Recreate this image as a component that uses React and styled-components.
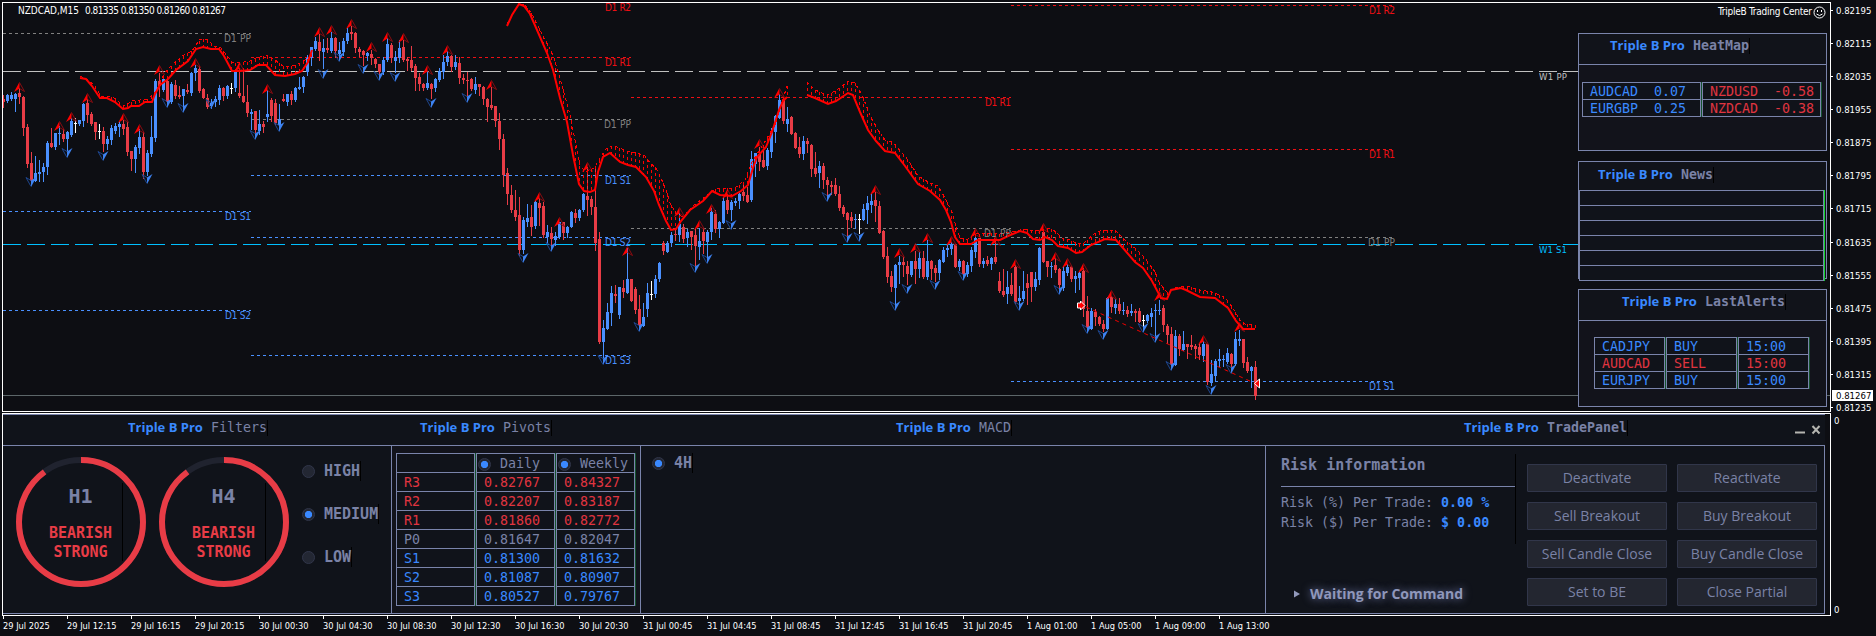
import React from 'react';
import styled, { createGlobalStyle } from 'styled-components';

// one candle per item: colour, high, body top, body bottom, low
const candles = `r 95 99 102 107,b 94 95 101 102,b 92 95 99 100,b 93 94 99 111,r 88 93 97 103,r 96 97 128 135,r 124 127 164 167,r 152 163 181 181
b 156 173 181 181,b 160 172 174 181,b 163 167 172 181,b 141 143 167 174,r 128 143 147 147,b 133 133 147 149,b 126 133 134 144,r 129 134 139 141
b 131 132 139 150,b 118 121 135 136,w 118 123 124 132,b 120 120 124 125,b 103 104 121 126,r 99 103 115 122,r 112 114 124 125,r 122 122 132 139
w 124 131 132 138,r 127 131 144 151,b 136 139 144 149,b 125 128 140 144,b 123 126 131 133,b 122 124 127 136,r 120 124 129 134,r 122 127 152 155
r 151 151 159 170,b 145 147 159 172,b 129 137 148 153,r 132 137 172 178,b 150 153 172 175,b 116 137 154 156,b 79 81 138 141,r 73 81 86 96
b 76 79 90 91,r 80 81 102 103,b 82 84 102 103,r 80 85 96 98,r 86 95 97 98,b 89 89 96 107,r 84 90 92 93,b 72 73 93 95
b 65 68 73 80,r 66 69 91 92,r 88 89 98 98,r 94 98 107 108,b 99 103 106 108,b 96 99 102 106,b 85 88 100 104,r 87 88 96 100
b 85 86 96 98,w 83 88 89 93,b 71 71 88 91,r 69 93 96 97,r 72 96 102 102,r 85 102 113 116,b 109 112 114 129,r 111 111 130 132
b 110 124 131 134,r 121 124 127 132,b 90 114 117 121,r 98 100 116 121,r 99 103 123 124,b 104 119 125 128,r 94 99 101 101,b 94 94 102 105
r 91 94 100 104,b 87 88 100 101,b 77 87 89 89,b 76 77 87 92,b 55 58 72 75,b 47 47 58 65,b 37 41 49 50,r 34 42 51 60
b 39 48 52 68,r 38 48 50 52,b 32 38 51 52,r 37 38 51 57,b 42 50 54 56,b 38 41 52 55,b 28 33 41 43,r 26 32 34 39
r 32 33 48 52,r 47 49 52 56,r 50 51 55 65,b 52 53 56 60,r 50 54 58 64,r 58 59 64 67,r 64 64 72 76,b 57 60 72 74
b 38 44 60 61,r 43 45 58 62,b 51 57 61 72,b 40 48 58 62,r 40 47 60 61,r 57 59 61 70,r 46 60 68 70,r 64 66 78 90
r 73 77 84 90,r 83 84 88 90,b 72 83 88 89,r 83 84 89 98,b 78 79 88 91,b 68 71 80 81,b 55 62 72 78,b 51 56 62 65
r 55 56 67 71,b 55 62 67 69,r 57 63 78 83,r 74 78 80 83,r 72 80 81 95,r 78 79 89 90,b 77 84 90 93,r 84 84 87 95
r 86 87 99 104,r 98 99 107 121,r 87 105 108 109,r 106 106 121 126,r 113 121 139 149,r 134 139 175 186,r 168 173 194 204,r 185 195 210 212
r 190 210 217 220,r 197 215 250 255,b 217 220 250 253,b 204 218 222 226,r 205 217 227 235,b 201 202 226 228,r 198 203 208 225,r 202 206 235 237
b 225 232 237 243,r 227 233 239 246,b 232 236 240 245,b 222 222 237 238,r 222 222 233 239,b 226 227 233 237,b 211 212 227 227,r 209 213 218 222
b 209 210 218 220,b 193 194 210 211,r 167 196 200 215,r 196 199 207 214,r 169 207 243 250,r 232 239 342 343,b 320 328 342 357,b 303 312 329 329
b 286 293 313 325,r 285 294 296 302,b 287 287 315 318,r 280 288 292 297,b 248 279 293 293,r 279 279 301 301,r 287 289 310 313,r 295 309 325 327
b 303 317 326 326,b 283 293 309 316,w 281 294 295 299,b 275 279 294 297,b 262 263 279 281,r 241 243 251 254,b 241 243 252 252,b 232 235 243 246
r 230 234 235 240,b 213 224 235 241,r 224 227 239 242,b 229 232 238 246,r 231 231 237 249,r 229 235 246 265,b 228 241 247 259,r 228 232 241 253
b 230 232 242 258,b 208 212 232 239,r 210 214 229 232,b 221 222 229 237,b 197 201 223 223,r 195 200 210 213,b 200 202 210 220,b 198 201 203 205
b 193 194 201 208,r 184 192 196 200,r 187 195 202 202,b 151 159 200 201,b 153 153 164 176,r 147 154 162 170,r 150 160 167 167,b 148 150 166 169
b 128 131 152 157,b 115 116 132 142,b 94 100 118 118,r 97 100 121 123,b 107 119 124 131,r 116 117 134 134,r 132 133 148 148,r 137 147 154 157
b 136 141 154 159,r 138 141 144 152,r 144 145 169 176,r 152 168 174 176,b 161 166 173 187,r 163 166 180 188,r 177 180 185 195,r 181 185 187 194
r 178 185 194 195,r 186 194 208 210,r 205 207 214 216,r 212 213 220 235,r 212 217 221 227,b 214 219 220 228,w 214 219 220 233,b 204 209 220 220
b 196 203 210 223,b 194 201 205 212,r 192 200 206 221,r 201 206 233 233,r 230 231 257 258,r 247 256 277 282,r 271 276 287 291,b 264 265 288 305
b 256 262 265 283,r 257 262 265 276,r 261 266 274 284,b 261 261 275 276,r 251 261 269 283,b 252 258 269 277,r 251 258 277 278,b 240 261 277 279
r 260 261 269 279,r 265 268 273 281,b 259 260 273 279,b 247 250 262 262,b 244 248 250 256,b 242 244 249 254,r 244 244 267 267,b 259 261 267 270
r 260 261 274 274,b 262 265 274 276,b 247 250 266 271,b 235 238 252 257,r 238 238 264 266,b 258 261 264 267,r 256 260 264 265,b 257 258 264 269
r 240 257 262 263,r 272 281 291 292,r 269 291 295 296,b 271 287 294 303,r 273 285 294 295,r 265 267 302 303,b 286 298 301 305,b 271 291 299 300
r 274 283 288 304,r 272 272 287 301,b 272 279 287 290,b 247 248 280 284,r 230 232 262 262,r 261 261 267 276,b 262 266 267 277,r 258 265 270 272
r 268 269 285 288,b 266 271 288 290,b 264 267 273 275,r 266 267 279 281,b 271 276 279 292,b 272 273 278 289,r 268 271 309 316,r 296 311 328 329
b 308 311 329 329,r 309 312 317 325,r 316 317 324 325,r 320 324 329 331,b 297 298 329 329,r 296 297 307 312,b 299 304 308 313,r 298 304 311 313
b 302 310 311 314,r 306 310 314 316,b 304 311 313 315,r 309 311 313 321,r 308 311 322 322,w 315 320 321 327,b 314 315 321 322,b 308 313 317 326
b 304 310 311 335,b 300 310 311 314,r 305 308 325 331,r 324 326 335 343,r 327 334 365 365,b 330 336 365 365,r 334 336 349 355,b 331 344 350 350
r 344 344 347 358,r 335 345 347 349,r 344 346 349 358,r 344 347 355 359,b 341 344 356 361,r 344 344 382 384,b 360 374 383 385,b 359 361 376 381
b 349 359 361 366,b 355 359 360 366,b 348 353 362 363,r 353 354 364 366,b 332 339 364 365,b 330 339 341 345,r 339 339 363 367,r 357 362 371 372
b 366 367 371 387,r 361 367 396 399`
  .split(/[,\n]/)
  .map((line, index) => {
    const [kind, ...values] = line.trim().split(' ');
    const [high, top, bottom, low] = values.map(Number);
    return { kind, high, top, bottom, low, x: 3 + index * 4 };
  });

const candleColors = { r: '#e83c46', b: '#4a90ff', w: '#ffffff' };

const toPoints = (text) =>
  text
    .trim()
    .split(/\s+/)
    .map((pair) => pair.split(',').map(Number));

const upArrows = toPoints(`19,82 59,121 71,112 87,93 123,113 139,124 159,65 195,58
  239,62 267,84 319,27 331,25 351,19 371,42 387,32 403,33 427,65 447,45 491,80 539,192
  587,162 559,217 627,246 679,207 699,220 711,204 727,189 759,139 779,88 875,185 899,248
  915,243 927,233 951,236 975,228 995,236 1015,259 1043,223 1055,252 1067,258 1083,263
  1111,290 1159,291 1203,335 1239,322`);

const downArrows = toPoints(`31,187 67,158 103,161 147,184 167,108 183,113 211,109
  255,140 279,132 323,79 339,62 363,74 379,81 395,82 431,108 467,103 523,263 551,252
  603,365 639,332 695,273 707,264 731,230 827,202 847,243 859,242 895,311 907,294 935,290
  963,281 1019,311 1059,295 1087,334 1103,340 1143,333 1155,343 1171,371 1211,395 1231,374`);

const averages = [
  {
    line: toPoints(`80,78 86,79 92,86 100,98 107,98 115,102 123,109 128,108 131,106 139,106
      145,102 152,102 155,94 160,85 168,79 176,70 188,61 196,49 203,47 211,49 219,49 224,56
      232,71 241,71 250,70 258,65 266,65 275,75 285,76 295,74 302,71 308,62 312,50`),
    band: toPoints(`80,76 88,80 95,86 101,96 113,97 124,106 132,101 148,99 157,90 162,78 167,70
      175,62 185,54 192,51 200,39 208,40 214,46 220,47 228,57 233,63 244,62 250,61 258,57
      266,55 275,60 283,66 292,66 300,63 310,57`),
  },
  {
    line: toPoints(`507,26 512,15 519,4 524,6 530,14 537,30 547,53 553,70 560,98 567,122 573,155
      579,184 584,191 590,192 595,190 598,172 603,157 610,153 620,162 628,165 636,167 646,177
      654,191 659,205 666,221 671,230 676,229 681,221 690,210 703,201 712,191 720,195 732,196
      741,191 748,185 753,168 757,157 766,147 772,132 779,110 783,101 787,97`),
    band: toPoints(`507,24 519,4 524,4 532,14 540,30 553,55 560,78 570,115 575,140 580,165 585,172
      594,168 599,160 605,150 610,146 617,147 627,151 637,153 645,156 650,163 656,168 661,178
      666,190 670,203 676,213 683,217 695,204 705,197 715,189 735,188 745,180 752,162 766,140
      775,125 787,86`),
  },
  {
    line: toPoints(`807,95 815,98 828,104 836,101 848,93 853,95 860,112 868,130 876,141 885,151
      895,153 905,166 918,184 930,191 940,200 946,210 951,222 955,237 960,244 971,244 978,240
      1000,240 1008,236 1020,231 1027,233 1033,239 1040,240 1045,237 1052,240 1058,246 1068,248
      1076,253 1082,252 1091,245 1105,239 1116,240 1123,248 1135,262 1143,268 1152,281 1160,296
      1161,298 1167,299 1171,290 1181,288 1186,290 1200,297 1215,298 1228,308 1236,321 1243,329
      1255,329`),
    band: toPoints(`807,82 815,90 827,95 837,90 848,81 855,83 862,95 870,115 878,130 885,140
      893,142 897,147 908,160 918,176 930,183 938,186 945,198 952,212 957,230 960,238 967,240
      975,234 985,233 1000,234 1015,231 1025,229 1035,231 1043,230 1050,228 1056,232 1062,238
      1070,240 1078,244 1085,242 1095,233 1103,230 1115,230 1125,240 1136,249 1145,258 1155,272
      1160,284 1167,292 1175,288 1183,286 1190,287 1200,290 1212,292 1225,297 1232,307 1240,320
      1245,324 1255,325`),
  },
];

const valueAt = (points, x) => {
  const next = points.findIndex((point) => point[0] >= x);
  if (next < 1) return points[next < 0 ? points.length - 1 : 0][1];
  const [x1, y1] = points[next - 1];
  const [x2, y2] = points[next];
  return y1 + ((y2 - y1) * (x - x1)) / (x2 - x1);
};

const GRAY = '#808080';
const RED = '#ee0f14';
const BLUE = '#4a90ff';

// label, start x, end x, y, colour
const levels = [
  ['D1 PP', 3, 251, 33, GRAY],
  ['D1 S1', 3, 251, 211, BLUE],
  ['D1 S2', 3, 251, 310, BLUE],
  ['D1 R2', 631, 631, 2, RED],
  ['D1 R1', 251, 631, 57, RED],
  ['D1 PP', 251, 631, 119, GRAY],
  ['D1 S1', 251, 631, 175, BLUE],
  ['D1 S2', 251, 631, 237, BLUE],
  ['D1 S3', 251, 631, 355, BLUE],
  ['D1 R1', 631, 1011, 97, RED],
  ['D1 PP', 631, 1011, 228, GRAY],
  ['D1 R2', 1011, 1395, 5, RED],
  ['D1 R1', 1011, 1395, 149, RED],
  ['D1 PP', 1011, 1395, 237, GRAY],
  ['D1 S1', 1011, 1395, 381, BLUE],
];

const prices = [
  '0.82195',
  '0.82115',
  '0.82035',
  '0.81955',
  '0.81875',
  '0.81795',
  '0.81715',
  '0.81635',
  '0.81555',
  '0.81475',
  '0.81395',
  '0.81315',
  '0.81235',
];

const times = [
  '29 Jul 2025',
  '29 Jul 12:15',
  '29 Jul 16:15',
  '29 Jul 20:15',
  '30 Jul 00:30',
  '30 Jul 04:30',
  '30 Jul 08:30',
  '30 Jul 12:30',
  '30 Jul 16:30',
  '30 Jul 20:30',
  '31 Jul 00:45',
  '31 Jul 04:45',
  '31 Jul 08:45',
  '31 Jul 12:45',
  '31 Jul 16:45',
  '31 Jul 20:45',
  '1 Aug 01:00',
  '1 Aug 05:00',
  '1 Aug 09:00',
  '1 Aug 13:00',
];

const pivots = [
  ['R3', '0.82767', '0.84327', 'red'],
  ['R2', '0.82207', '0.83187', 'red'],
  ['R1', '0.81860', '0.82772', 'red'],
  ['P0', '0.81647', '0.82047', 'muted'],
  ['S1', '0.81300', '0.81632', 'blue'],
  ['S2', '0.81087', '0.80907', 'blue'],
  ['S3', '0.80527', '0.79767', 'blue'],
];

const alerts = [
  ['CADJPY', 'BUY', '15:00', 'blue'],
  ['AUDCAD', 'SELL', '15:00', 'red'],
  ['EURJPY', 'BUY', '15:00', 'blue'],
];

const actions = [
  'Deactivate',
  'Reactivate',
  'Sell Breakout',
  'Buy Breakout',
  'Sell Candle Close',
  'Buy Candle Close',
  'Set to BE',
  'Close Partial',
];

const Chart = () => (
  <ChartSvg width="1829" height="408" viewBox="3 3 1829 408">
    <g shapeRendering="crispEdges">
      {levels.map(([label, x1, x2, y, color], index) => (
        <path
          key={index}
          d={`M${x1} ${y + 0.5}H${x2}`}
          stroke={color}
          strokeDasharray="3 3"
        />
      ))}
      <path d="M3 71.5H1578" stroke="#c0c0c0" strokeDasharray="18 6" />
      <path d="M3 244.5H1578" stroke="#00bfff" strokeDasharray="18 6" />
      <path d="M3 395.5H1831" stroke="#5c6669" />
      {candles.map((candle) => (
        <g key={candle.x} fill={candleColors[candle.kind]}>
          <rect
            x={candle.x}
            y={candle.high}
            width="1"
            height={candle.low - candle.high + 1}
          />
          <rect
            x={candle.x - 1}
            y={candle.top}
            width="3"
            height={candle.bottom - candle.top}
          />
        </g>
      ))}
    </g>
    {upArrows.map(([x, y]) => (
      <g key={`${x}-${y}`} transform={`translate(${x + 0.5} ${y})`}>
        <path d="M0 0L-5.5 10L0 6.5Z" fill="#ff0000" />
        <path d="M0 .5L5 9.5L0 6.5" fill="none" stroke="#8a0b10" />
      </g>
    ))}
    {downArrows.map(([x, y]) => (
      <g key={`${x}-${y}`} transform={`translate(${x} ${y})`}>
        <path d="M0 0L5.5 -10L0 -6.5Z" fill="#3d83f2" />
        <path d="M0 -.5L-5 -9.5L0 -6.5" fill="none" stroke="#1d468f" />
      </g>
    ))}
    {averages.map(({ line, band }, index) => (
      <g key={index} fill="none" stroke="#ff0000">
        <polyline points={line.join(' ')} strokeWidth="2" />
        <g strokeWidth="1" strokeDasharray="3 3" shapeRendering="crispEdges">
          <polyline points={band.join(' ')} />
          {candles
            .filter(({ x }) => x >= line[0][0] && x <= line[line.length - 1][0])
            .map(({ x }) => (
              <path
                key={x}
                d={`M${x + 0.5} ${valueAt(band, x)}V${valueAt(line, x)}`}
              />
            ))}
        </g>
      </g>
    ))}
    <path d="M1086 307L1252 382" stroke="#e00" strokeDasharray="4 4" />
    <path
      d="M1077.5 303H1080.500V301L1085 305.500L1080.500 310V308H1077.500Z"
      fill="#f00"
      stroke="#fff"
    />
    <path d="M1254.500 383.500L1259.500 379V388Z" fill="#f00" stroke="#fff" />
    {levels.map(([label, x1, x2, y, color], index) => (
      <text
        key={index}
        x={x2 - (label === 'D1 PP' ? 27 : 26)}
        y={y + 9}
        fill={color}
        fontSize="10"
        textLength={label === 'D1 PP' ? 27 : 26}
      >
        {label}
      </text>
    ))}
    <text x="1539" y="80" fill="#c0c0c0" fontSize="9.500" textLength="28">
      W1 PP
    </text>
    <text x="1539" y="253" fill="#00bfff" fontSize="9.500" textLength="28">
      W1 S1
    </text>
    <text x="18" y="14" fill="#fff" fontSize="10" textLength="61">
      NZDCAD,M15
    </text>
    <text x="85" y="14" fill="#fff" fontSize="10" textLength="141">
      0.81335 0.81350 0.81260 0.81267
    </text>
    <text x="1718" y="15" fill="#fff" fontSize="10" textLength="94">
      TripleB Trading Center
    </text>
    <g fill="none" stroke="#fff">
      <circle cx="1819.500" cy="12.500" r="5.500" />
      <path d="M1816.500 14q3 3 6 0M1817.500 10v2M1821.500 10v2" />
    </g>
  </ChartSvg>
);

const Title = ({ name, bold }) => (
  <TitleWrapper>
    <Brand>Triple B Pro</Brand>
    <PanelName $bold={bold}>{name}</PanelName>
  </TitleWrapper>
);

const HeatMap = () => (
  <SidePanel>
    <SideHeader $height={30} $indent={31} $lift={8}>
      <Title name="HeatMap" bold />
    </SideHeader>
    <SideBody $padding="17px 0 0 3px">
      <Table $columns="120px 120px" $row={17}>
        <Cell $tone="blue" $wide>
          <span>AUDCAD</span>
          <span>0.07</span>
        </Cell>
        <Cell $tone="red" $wide>
          <span>NZDUSD</span>
          <span>-0.58</span>
        </Cell>
        <Cell $tone="blue" $wide>
          <span>EURGBP</span>
          <span>0.25</span>
        </Cell>
        <Cell $tone="red" $wide>
          <span>NZDCAD</span>
          <span>-0.38</span>
        </Cell>
      </Table>
    </SideBody>
  </SidePanel>
);

const News = () => (
  <SidePanel>
    <SideHeader $height={27} $indent={19} $lift={4} $plain>
      <Title name="News" bold />
    </SideHeader>
    <NewsRows>
      {[0, 1, 2, 3, 4, 5].map((row) => (
        <NewsRow key={row} />
      ))}
    </NewsRows>
  </SidePanel>
);

const LastAlerts = () => (
  <SidePanel>
    <SideHeader $height={30} $indent={43} $lift={8}>
      <Title name="LastAlerts" bold />
    </SideHeader>
    <SideBody $padding="16px 0 0 15px">
      <Table $columns="72px 72px 72px" $row={17}>
        {alerts.map(([pair, side, time, tone]) => (
          <React.Fragment key={pair}>
            <Cell $tone={tone}>{pair}</Cell>
            <Cell $tone={tone}>{side}</Cell>
            <Cell $tone={tone}>{time}</Cell>
          </React.Fragment>
        ))}
      </Table>
    </SideBody>
  </SidePanel>
);

const Gauge = ({ frame }) => (
  <GaugeWrapper>
    <svg width="130" height="130" viewBox="0 0 130 130" fill="none">
      <circle cx="65" cy="65" r="62" stroke="#20232f" strokeWidth="6" />
      <circle
        cx="65"
        cy="65"
        r="62"
        stroke="#e83c46"
        strokeWidth="6"
        pathLength="100"
        strokeDasharray="90 10"
        transform="rotate(-90 65 65)"
      />
    </svg>
    <GaugeText>
      <GaugeFrame>{frame}</GaugeFrame>
      <GaugeState>BEARISH</GaugeState>
      <GaugeState>STRONG</GaugeState>
    </GaugeText>
  </GaugeWrapper>
);

const Option = ({ label, checked }) => (
  <OptionWrapper>
    <Radio $checked={checked} />
    <OptionLabel>{label}</OptionLabel>
  </OptionWrapper>
);

const App = () => {
  return (
    <Page>
      <GlobalStyle />
      <Main>
        <Windows>
          <ChartWindow>
            <Chart />
            <SidePanels>
              <HeatMap />
              <News />
              <LastAlerts />
            </SidePanels>
          </ChartWindow>
          <PanelWindow>
            <Section $width={388}>
              <SectionHeader $indent={125}>
                <Title name="Filters" />
              </SectionHeader>
              <FiltersBody>
                <Gauge frame="H1" />
                <Gauge frame="H4" />
                <Options>
                  <Option label="HIGH" />
                  <Option label="MEDIUM" checked />
                  <Option label="LOW" />
                </Options>
              </FiltersBody>
            </Section>
            <Section $width={249}>
              <SectionHeader $indent={29}>
                <Title name="Pivots" />
              </SectionHeader>
              <PivotsBody>
                <Table $columns="80px 80px 80px" $row={19}>
                  <Cell />
                  <Cell $tone="muted" $radio>
                    <Radio $checked />
                    Daily
                  </Cell>
                  <Cell $tone="muted" $radio>
                    <Radio $checked />
                    Weekly
                  </Cell>
                  {pivots.map(([level, daily, weekly, tone]) => (
                    <React.Fragment key={level}>
                      <Cell $tone={tone}>{level}</Cell>
                      <Cell $tone={tone}>{daily}</Cell>
                      <Cell $tone={tone}>{weekly}</Cell>
                    </React.Fragment>
                  ))}
                </Table>
              </PivotsBody>
            </Section>
            <Section $width={625}>
              <SectionHeader $indent={256}>
                <Title name="MACD" />
              </SectionHeader>
              <MacdBody>
                <Option label="4H" checked />
              </MacdBody>
            </Section>
            <Section $width={560}>
              <SectionHeader $indent={199}>
                <Title name="TradePanel" bold />
                <WindowIcons width="26" height="12" viewBox="0 0 26 12">
                  <path d="M0 8.500H10" />
                  <path d="M17.500 2L24.500 9.500M24.500 2L17.500 9.500" />
                </WindowIcons>
              </SectionHeader>
              <TradeBody>
                <RiskColumn>
                  <RiskInfo>
                    <RiskTitle>Risk information</RiskTitle>
                    <RiskRow>
                      Risk (%) Per Trade: <b>0.00 %</b>
                    </RiskRow>
                    <RiskRow>
                      Risk ($) Per Trade: <b>$ 0.00</b>
                    </RiskRow>
                  </RiskInfo>
                  <Status>
                    <svg width="6" height="8" viewBox="0 0 6 8">
                      <path d="M0 .5L6 4L0 7.500Z" fill="#9299bb" />
                    </svg>
                    Waiting for Command
                  </Status>
                </RiskColumn>
                <Actions>
                  {actions.map((action) => (
                    <ActionButton key={action}>{action}</ActionButton>
                  ))}
                </Actions>
              </TradeBody>
            </Section>
          </PanelWindow>
        </Windows>
        <PriceAxis>
          <Prices>
            {prices.map((price) => (
              <Price key={price}>{price}</Price>
            ))}
            <CurrentPrice>0.81267</CurrentPrice>
          </Prices>
          <Scale>
            <span>0</span>
            <span>0</span>
          </Scale>
        </PriceAxis>
      </Main>
      <TimeAxis>
        {times.map((time) => (
          <Time key={time}>{time}</Time>
        ))}
      </TimeAxis>
    </Page>
  );
};

export default App;

const tones = { red: '#e03540', blue: '#3a89ff', muted: '#7a82a6' };

const GlobalStyle = createGlobalStyle`
  :root {
    --bg: #0d0e13;
    --panel: #10131a;
    --line: #7a84ab;
    --muted: #7a82a6;
    --blue: #3a89ff;
    --red: #e83c46;
    --small: 'DejaVu Sans Condensed', 'DejaVu Sans', sans-serif;
    --sans: 'Open Sans', sans-serif;
    --mono: 'DejaVu Sans Mono', monospace;
  }
  * {
    box-sizing: border-box;
  }
  body {
    margin: 0;
    background: var(--bg);
  }
`;

const Page = styled.div`
  width: 1876px;
  height: 636px;
  padding: 2px 0 0 2px;
  overflow: hidden;
  background: var(--bg);
  color: #fff;
  font-family: var(--small);
  font-stretch: condensed;
`;

const Main = styled.main`
  display: flex;
`;

const Windows = styled.div`
  display: flex;
  flex-direction: column;
  gap: 1px;
  width: 1829px;
`;

const ChartWindow = styled.section`
  position: relative;
  height: 410px;
  border: 1px solid #fff;
  overflow: hidden;
`;

const ChartSvg = styled.svg`
  display: block;
  font-family: var(--small);
  font-stretch: condensed;
`;

const SidePanels = styled.div`
  position: absolute;
  top: 30px;
  right: 3px;
  display: flex;
  flex-direction: column;
  gap: 10px;
  width: 249px;
`;

const SidePanel = styled.div`
  height: 118px;
  border: 1px solid var(--line);
  background: var(--panel);
`;

const SideHeader = styled.div`
  display: flex;
  align-items: center;
  height: ${({ $height }) => $height + 1}px;
  padding: 0 0 ${({ $lift }) => $lift}px ${({ $indent }) => $indent}px;
  border-bottom: 1px solid ${({ $plain }) => ($plain ? 'transparent' : 'var(--line)')};
  background: #11131a;
`;

const SideBody = styled.div`
  padding: ${({ $padding }) => $padding};
  height: 85px;
  background: #12131b;
`;

const TitleWrapper = styled.div`
  display: flex;
  align-items: center;
`;

const Brand = styled.span`
  width: 83px;
  color: var(--blue);
  font: 700 13px/18px var(--sans);
  white-space: nowrap;
`;

const PanelName = styled.span`
  margin-top: 2px;
  border-right: 1px solid #000;
  color: var(--muted);
  font: ${({ $bold }) => ($bold ? 700 : 400)} 13.300px/16px var(--mono);
`;

const Table = styled.div`
  display: grid;
  grid-template-columns: ${({ $columns }) => $columns};
  grid-auto-rows: ${({ $row }) => $row}px;
  width: fit-content;
`;

const Cell = styled.div`
  display: flex;
  align-items: center;
  gap: ${({ $wide }) => ($wide ? 16 : 9)}px;
  margin: 0 1px -1px 0;
  padding: 2px 0 0 ${({ $radio }) => ($radio ? 1 : 7)}px;
  border: 1px solid var(--line);
  box-shadow: 1px 0 0 #14532e;
  background: var(--panel);
  color: ${({ $tone }) => tones[$tone]};
  font: 400 13.300px/16px var(--mono);
`;

const NewsRows = styled.div`
  width: 246px;
  border-right: 1px solid #0fd62a;
`;

const NewsRow = styled.div`
  height: 16px;
  margin-bottom: -1px;
  border: 1px solid var(--line);
  background: var(--panel);
`;

const PanelWindow = styled.section`
  display: flex;
  height: 203px;
  border: 1px solid #fff;
  background: var(--bg);
`;

const Section = styled.div`
  width: ${({ $width }) => $width}px;
  height: 200px;
  border-top: 1px solid var(--line);
  border-bottom: 1px solid var(--line);
  background: var(--panel);
`;

const SectionHeader = styled.header`
  display: flex;
  align-items: center;
  justify-content: space-between;
  height: 31px;
  padding: 0 4px 6px ${({ $indent }) => $indent}px;
  border-bottom: 1px solid var(--line);
`;

const WindowIcons = styled.svg`
  margin-top: 5px;
  fill: none;
  stroke: #b5b5b0;
  stroke-width: 2;
`;

const FiltersBody = styled.div`
  display: flex;
  gap: 13px;
  height: 167px;
  padding: 11px 0 0 13px;
`;

const GaugeWrapper = styled.div`
  display: grid;
  width: 130px;
  height: 130px;

  > * {
    grid-area: 1 / 1;
  }
`;

const GaugeText = styled.div`
  width: 84px;
  height: 78px;
  margin: 26px 0 0 23px;
  border-right: 1px solid #000;
  text-align: center;
`;

const GaugeFrame = styled.div`
  margin-bottom: 15px;
  color: var(--muted);
  font: 700 20px/26px var(--mono);
`;

const GaugeState = styled.div`
  color: var(--red);
  font: 700 15px/19px var(--mono);
`;

const Options = styled.div`
  display: flex;
  flex-direction: column;
  gap: 23px;
  padding: 4px 0 0 0;
`;

const OptionWrapper = styled.div`
  display: flex;
  align-items: center;
  gap: 9px;
  height: 20px;
`;

const OptionLabel = styled.span`
  color: var(--muted);
  font: 700 15px/20px var(--mono);
  border-right: 1px solid #000;
`;

const Radio = styled.span`
  flex: none;
  width: 13px;
  height: 13px;
  border: 1px solid #31364a;
  border-radius: 50%;
  background: ${({ $checked }) =>
    $checked
      ? 'radial-gradient(circle, #3a89ff 3.300px, #232733 4px)'
      : '#232733'};
`;

const PivotsBody = styled.div`
  height: 167px;
  padding: 7px 0 0 4px;
  border-left: 1px solid var(--line);
  background: #12131b;
`;

const MacdBody = styled.div`
  height: 167px;
  padding: 7px 0 0 11px;
  border-left: 1px solid var(--line);
`;

const TradeBody = styled.div`
  display: flex;
  gap: 11px;
  height: 167px;
  border-left: 1px solid var(--line);
  border-right: 1px solid var(--line);
`;

const RiskColumn = styled.div`
  width: 250px;
  padding: 8px 0 0 15px;
`;

const RiskInfo = styled.div`
  height: 90px;
  border-right: 1px solid #000;
  color: var(--muted);
`;

const RiskTitle = styled.div`
  height: 33px;
  margin-bottom: 6px;
  border-bottom: 1px solid var(--line);
  font: 700 15px/22px var(--mono);
`;

const RiskRow = styled.div`
  font: 400 13.300px/20px var(--mono);
  white-space: pre;

  b {
    color: var(--blue);
  }
`;

const Status = styled.div`
  display: flex;
  align-items: center;
  gap: 10px;
  margin: 40px 0 0 13px;
  color: #8f97bb;
  font: 700 14px/20px var(--sans);
  text-shadow: 0 0 8px #6d76a4;
`;

const Actions = styled.div`
  display: grid;
  grid-template-columns: 140px 140px;
  grid-auto-rows: 28px;
  gap: 10px;
  padding-top: 18px;
`;

const ActionButton = styled.button`
  padding: 0 0 1px;
  border: 1px solid #31364a;
  border-radius: 1px;
  background: #232630;
  color: var(--muted);
  font: 400 14px/20px var(--sans);
`;

const PriceAxis = styled.aside`
  width: 45px;
  font-size: 9.500px;
  line-height: 11px;
`;

const Prices = styled.div`
  position: relative;
  height: 412px;
  padding-top: 3px;
`;

const Price = styled.div`
  display: flex;
  align-items: flex-start;
  height: 33.080px;

  &::before {
    content: '';
    width: 2px;
    height: 1px;
    margin: 5px 3px 0 0;
    background: #fff;
  }
`;

const CurrentPrice = styled.div`
  position: absolute;
  top: 388px;
  left: 1px;
  width: 41px;
  padding-left: 4px;
  background: #fff;
  color: #000;
`;

const Scale = styled.div`
  display: flex;
  flex-direction: column;
  justify-content: space-between;
  height: 200px;
  margin-top: 1px;
  padding-left: 3px;
`;

const TimeAxis = styled.footer`
  display: flex;
  padding-left: 1px;
  font-size: 9.200px;
  line-height: 11px;
`;

const Time = styled.div`
  width: 64px;
  text-indent: -1px;
  white-space: nowrap;

  &::before {
    content: '';
    display: block;
    width: 1px;
    height: 3px;
    margin-bottom: 1px;
    background: #fff;
  }
`;
